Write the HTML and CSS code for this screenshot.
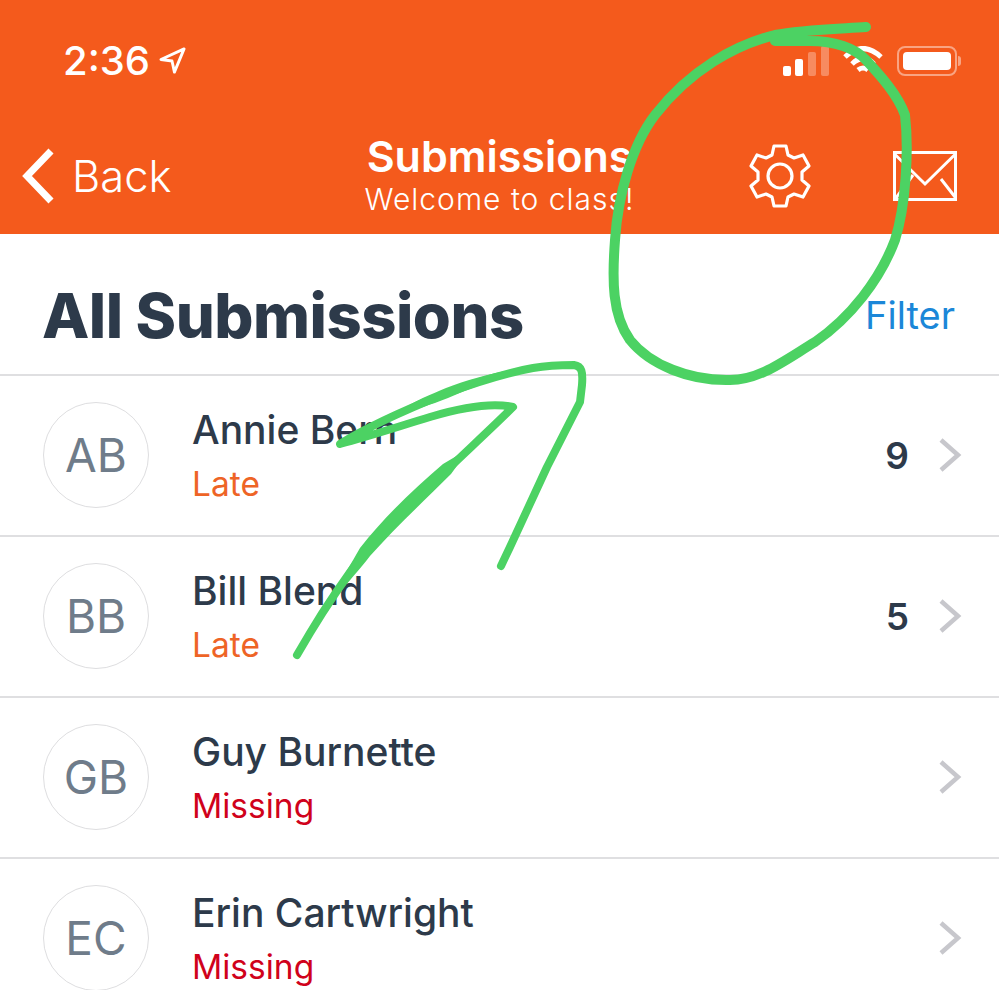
FILE: index.html
```html
<!DOCTYPE html>
<html lang="en">
<head>
    <meta charset="UTF-8">
    <meta name="viewport" content="width=device-width, initial-scale=1.0">
    <title>Submissions</title>
    <link rel="stylesheet" href="styles.css">
</head>
<body>
    <div class="screen">
        <header class="top">
            <div class="status">
                <div class="status-left">
                    <span class="clock">2:36</span>
                    <svg class="arrow-loc" viewBox="0 0 28 28"><path d="M2 13 L26 2 L16 26 L13.5 14.5 Z"/></svg>
                </div>
                <div class="status-right">
                    <svg class="signal" viewBox="0 0 46 30">
                        <rect x="0" y="20" width="8" height="10" rx="2" fill="#fff"/>
                        <rect x="12" y="13" width="8" height="17" rx="2" fill="#fff"/>
                        <rect x="25" y="6" width="8" height="24" rx="2" fill="#fff" opacity=".3"/>
                        <rect x="38" y="0" width="8" height="30" rx="2" fill="#fff" opacity=".3"/>
                    </svg>
                    <svg class="wifi" viewBox="0 0 40 30">
                        <path d="M2 11 Q20 -6 38 11 M9 18 Q20 7 31 18 M15 24 Q20 20 25 24" fill="none" stroke="#fff" stroke-width="5"/>
                    </svg>
                    <div class="battery"><div class="battery-level"></div></div>
                    <div class="battery-cap"></div>
                </div>
            </div>
            <nav class="nav">
                <div class="back">
                    <svg class="back-icon" viewBox="0 0 34 56"><path d="M30 3 L6 28 L30 53" fill="none" stroke="#fff" stroke-width="7"/></svg>
                    <span>Back</span>
                </div>
                <div class="nav-title">
                    <div class="title">Submissions</div>
                    <div class="subtitle">Welcome to class!</div>
                </div>
                <div class="nav-icons">
                    <svg class="gear" viewBox="0 0 64 64" fill="none" stroke="#fff" stroke-width="3.2" stroke-linejoin="round">
                        <circle cx="32" cy="32" r="12"/>
                        <path d="M26 2 H38 L40 11 L46 14 L55 11 L61 22 L54 28 V36 L61 42 L55 53 L46 50 L40 53 L38 62 H26 L24 53 L18 50 L9 53 L3 42 L10 36 V28 L3 22 L9 11 L18 14 L24 11 Z"/>
                    </svg>
                    <svg class="mail" viewBox="0 0 64 50" fill="none" stroke="#fff" stroke-width="3">
                        <rect x="1.5" y="1.5" width="61" height="47"/>
                        <path d="M1.5 3 L32 33 L62.5 3 M3 47 L20 24 M48 28 L62 46"/>
                    </svg>
                </div>
            </nav>
        </header>

        <div class="heading">
            <h1>All Submissions</h1>
            <span class="filter">Filter</span>
        </div>

        <ul class="list">
            <li class="row">
                <div class="avatar">AB</div>
                <div class="info">
                    <div class="name">Annie Bern</div>
                    <div class="state late">Late</div>
                </div>
                <span class="count">9</span>
                <svg class="chevron" viewBox="0 0 24 36"><path d="M3 3 L20 18 L3 33" fill="none" stroke="#c7c7cc" stroke-width="4.5"/></svg>
            </li>
            <li class="row">
                <div class="avatar">BB</div>
                <div class="info">
                    <div class="name">Bill Blend</div>
                    <div class="state late">Late</div>
                </div>
                <span class="count">5</span>
                <svg class="chevron" viewBox="0 0 24 36"><path d="M3 3 L20 18 L3 33" fill="none" stroke="#c7c7cc" stroke-width="4.5"/></svg>
            </li>
            <li class="row">
                <div class="avatar">GB</div>
                <div class="info">
                    <div class="name">Guy Burnette</div>
                    <div class="state missing">Missing</div>
                </div>
                <svg class="chevron" viewBox="0 0 24 36"><path d="M3 3 L20 18 L3 33" fill="none" stroke="#c7c7cc" stroke-width="4.5"/></svg>
            </li>
            <li class="row">
                <div class="avatar">EC</div>
                <div class="info">
                    <div class="name">Erin Cartwright</div>
                    <div class="state missing">Missing</div>
                </div>
                <svg class="chevron" viewBox="0 0 24 36"><path d="M3 3 L20 18 L3 33" fill="none" stroke="#c7c7cc" stroke-width="4.5"/></svg>
            </li>
        </ul>

        <!-- hand drawn marks on top of the screenshot -->
        <svg class="scribble" viewBox="0 0 999 990" fill="none" stroke="#4cd263" stroke-linecap="round" stroke-linejoin="round">
            <path stroke-width="10" d="M866 27 C835 29 800 30 775 35 C735 45 690 70 655 115 C632 145 618 195 615 240 C612 280 612 315 630 340 C650 365 690 381 730 380 C760 380 785 360 815 342 C850 318 880 280 895 240 C906 205 909 150 905 115 C898 95 880 75 866 60 C855 48 835 41 810 41 L775 41"/>
            <path stroke-width="8" d="M297 655 L310 633 C325 608 340 585 365 552 C390 522 420 495 447 470 C470 448 495 425 513 407 C490 402 460 408 430 417 C400 426 370 436 340 444 C370 425 410 408 447 393 C480 381 510 372 533 368 C550 365 565 365 574 365 C582 366 583 372 582 385 L580 402 L547 467 L510 547 L501 566"/>
            <path class="thick" d="M325 608 C340 582 352 562 360 548 C385 516 415 488 443 464 L470 448 L451 474 C425 500 395 528 370 556 C350 582 338 592 325 608 Z"/>
            <path class="thick" d="M395 414 C415 400 432 394 446 388 C475 377 510 368 540 367 C510 374 480 384 448 398 C430 405 415 410 395 414 Z"/>
        </svg>
    </div>
</body>
</html>
```

FILE: styles.css
```css
:root {
    --orange: #f45a1c;
    --ink: #2d3a4a;
    --line: #dfdfe1;
}
* {
    box-sizing: border-box;
}
html, body {
    margin: 0;
    padding: 0;
    background: #fff;
}
body {
    font-family: Inter, "Liberation Sans", sans-serif;
    color: var(--ink);
}
.screen {
    position: relative;
    width: 999px;
    height: 990px;
    overflow: hidden;
}
.top {
    height: 234px;
    background: var(--orange);
    color: #fff;
}
.status {
    display: flex;
    justify-content: space-between;
    align-items: center;
    height: 125px;
    padding: 0 38px 4px 63px;
}
.status-left {
    display: flex;
    align-items: center;
    gap: 9px;
}
.clock {
    font-size: 40px;
    font-weight: 500;
}
.arrow-loc {
    width: 27px;
    height: 27px;
    fill: none;
    stroke: #fff;
    stroke-width: 3;
    stroke-linejoin: round;
}
.status-right {
    display: flex;
    align-items: center;
}
.signal {
    width: 46px;
    height: 30px;
    margin-right: 14px;
}
.wifi {
    width: 40px;
    height: 30px;
    margin-right: 14px;
}
.battery {
    width: 60px;
    height: 30px;
    padding: 4px;
    border: 2px solid rgba(255,255,255,.45);
    border-radius: 8px;
}
.battery-level {
    height: 100%;
    background: #fff;
    border-radius: 4px;
}
.battery-cap {
    width: 3px;
    height: 10px;
    margin-left: 1px;
    background: rgba(255,255,255,.45);
    border-radius: 0 3px 3px 0;
}
.nav {
    display: grid;
    grid-template-columns: 1fr auto 1fr;
    align-items: center;
    height: 109px;
    padding: 0 42px 8px 42px;
}
.back {
    display: flex;
    align-items: center;
    gap: 17px;
    margin-left: -21px;
    font-size: 43.5px;
    font-weight: 300;
}
.back-icon {
    width: 34px;
    height: 56px;
}
.nav-title {
    text-align: center;
}
.title {
    font-size: 43px;
    font-weight: 600;
    line-height: 46px;
}
.subtitle {
    font-size: 30px;
    line-height: 40px;
    letter-spacing: 1px;
    font-weight: 300;
}
.nav-icons {
    display: flex;
    justify-content: flex-end;
    align-items: center;
    gap: 81px;
}
.gear {
    width: 64px;
    height: 64px;
}
.mail {
    width: 64px;
    height: 50px;
}
.heading {
    display: flex;
    justify-content: space-between;
    align-items: center;
    height: 142px;
    padding: 22px 44px 0 42px;
    border-bottom: 2px solid var(--line);
}
h1 {
    margin: 0;
    font-size: 61.5px;
    font-weight: 800;
    letter-spacing: -0.5px;
}
.filter {
    font-size: 38px;
    color: #1b87d8;
}
.list {
    list-style: none;
    margin: 0;
    padding: 0;
}
.row {
    display: flex;
    align-items: center;
    height: 161px;
    padding: 0 37px 0 43px;
    border-bottom: 2px solid var(--line);
}
.avatar {
    display: flex;
    justify-content: center;
    align-items: center;
    flex: none;
    width: 106px;
    height: 106px;
    margin: -2px 43px 0 0;
    border: 1.5px solid #dedee0;
    border-radius: 50%;
    font-size: 46px;
    color: #6f7c8a;
}
.info {
    flex: 1;
    padding-top: 2px;
}
.name {
    font-size: 39px;
    font-weight: 500;
    line-height: 50px;
}
.state {
    margin-top: 4px;
    font-size: 33.5px;
    line-height: 50px;
}
.late {
    color: #ee6426;
}
.missing {
    color: #d0021b;
}
.count {
    margin-right: 29px;
    font-size: 37px;
    font-weight: 600;
}
.chevron {
    width: 24px;
    height: 36px;
    margin-top: -2px;
}
.scribble {
    position: absolute;
    top: 0;
    left: 0;
    width: 999px;
    height: 990px;
}
.thick {
    fill: #4cd263;
    stroke: none;
}
```
